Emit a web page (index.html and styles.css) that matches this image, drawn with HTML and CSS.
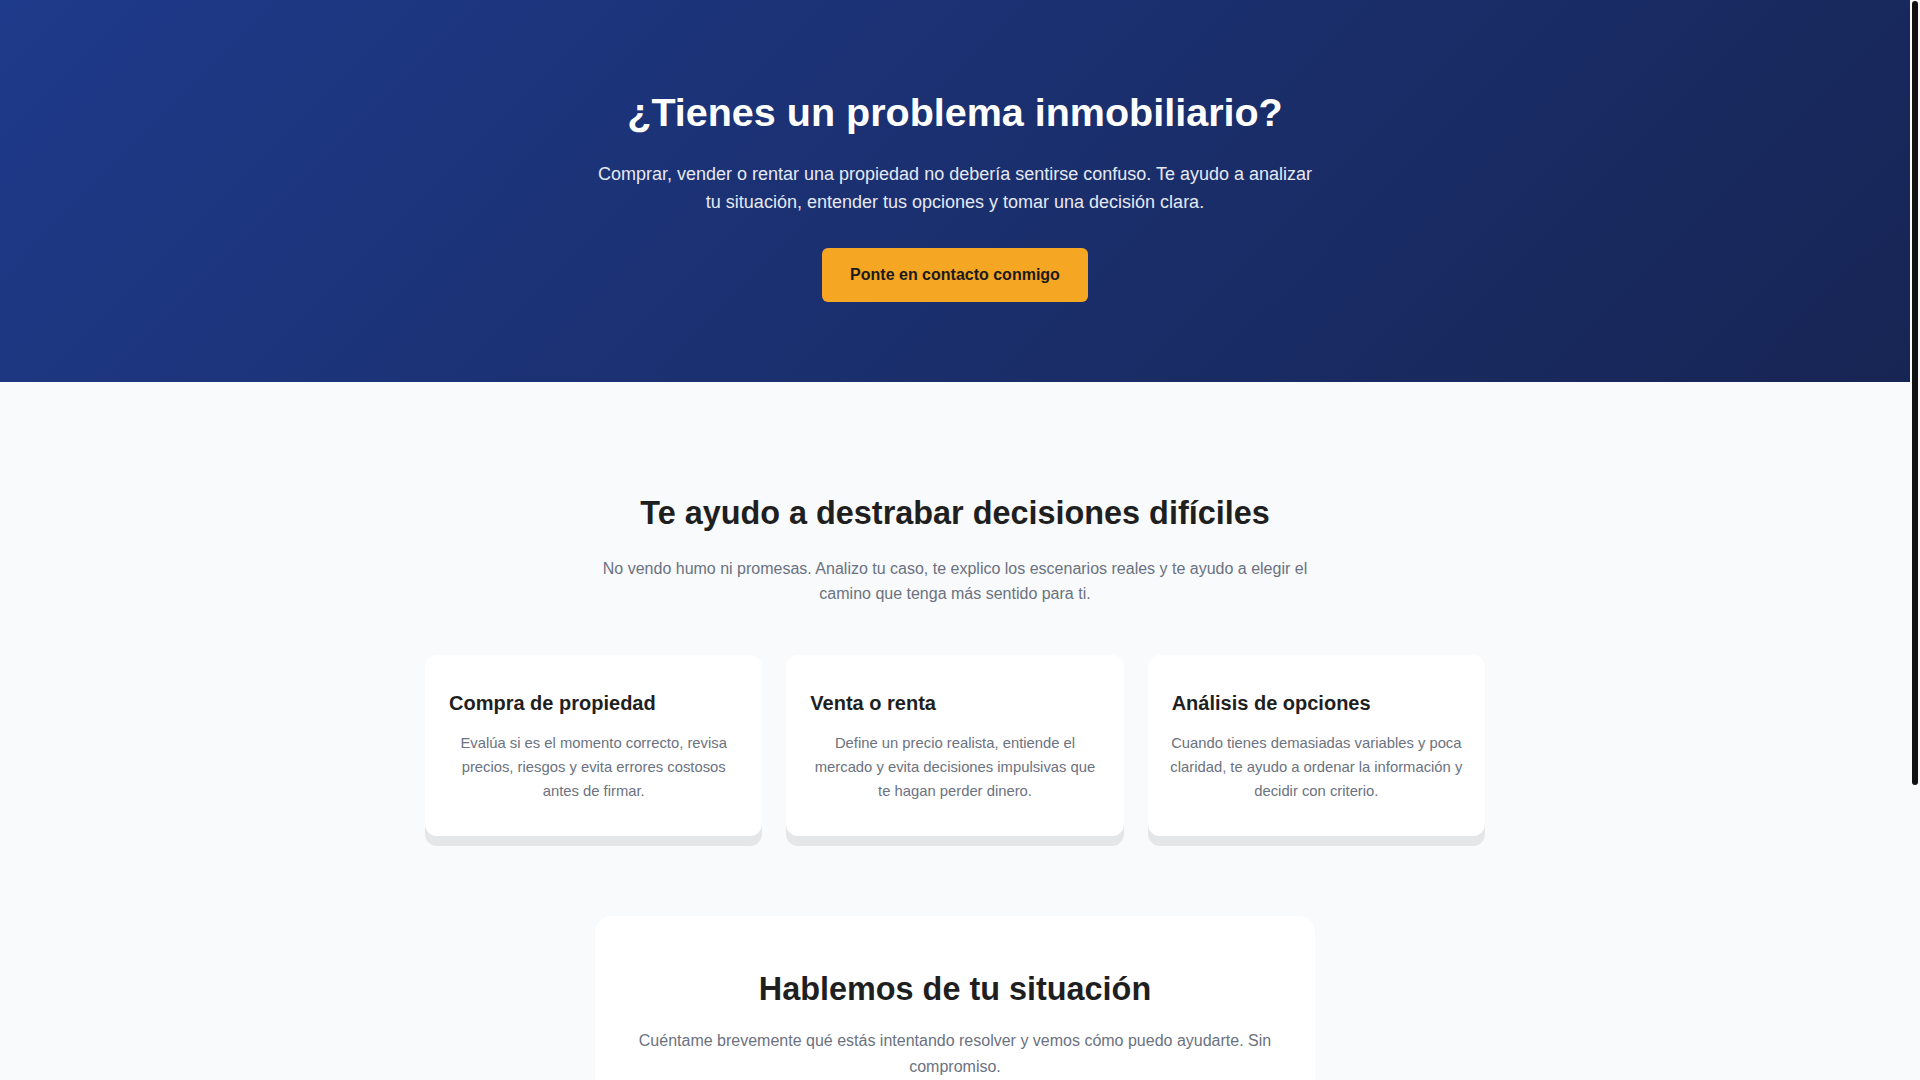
FILE: index.html
```html
<!DOCTYPE html>
<html lang="es">
<head>
<meta charset="utf-8">
<title>Asesoría inmobiliaria</title>
<link rel="stylesheet" href="styles.css">
</head>
<body>
  <header class="hero">
    <h1 class="hero-title">¿Tienes un problema inmobiliario?</h1>
    <p class="hero-text">Comprar, vender o rentar una propiedad no debería sentirse confuso. Te ayudo a analizar tu situación, entender tus opciones y tomar una decisión clara.</p>
    <a class="btn-primary" href="#contacto">Ponte en contacto conmigo</a>
  </header>

  <section class="services">
    <h2 class="section-title">Te ayudo a destrabar decisiones difíciles</h2>
    <p class="section-text">No vendo humo ni promesas. Analizo tu caso, te explico los escenarios reales y te ayudo a elegir el camino que tenga más sentido para ti.</p>
    <div class="cards">
      <article class="card">
        <h3 class="card-title">Compra de propiedad</h3>
        <p class="card-text">Evalúa si es el momento correcto, revisa precios, riesgos y evita errores costosos antes de firmar.</p>
      </article>
      <article class="card">
        <h3 class="card-title">Venta o renta</h3>
        <p class="card-text">Define un precio realista, entiende el mercado y evita decisiones impulsivas que te hagan perder dinero.</p>
      </article>
      <article class="card">
        <h3 class="card-title">Análisis de opciones</h3>
        <p class="card-text">Cuando tienes demasiadas variables y poca claridad, te ayudo a ordenar la información y decidir con criterio.</p>
      </article>
    </div>
  </section>

  <section class="contact" id="contacto">
    <div class="contact-card">
      <h2 class="contact-title">Hablemos de tu situación</h2>
      <p class="contact-text">Cuéntame brevemente qué estás intentando resolver y vemos cómo puedo ayudarte. Sin compromiso.</p>
      <form class="contact-form">
        <input class="field" type="text" placeholder="Tu nombre">
        <input class="field" type="text" placeholder="Tu teléfono o correo">
        <textarea class="field field-area" placeholder="Cuéntame tu situación"></textarea>
        <button class="btn-submit" type="button">Enviar mensaje</button>
      </form>
    </div>
  </section>

  <div class="scroll-thumb" aria-hidden="true"></div>
</body>
</html>
```

FILE: styles.css
```css
* {
  box-sizing: border-box;
}

html {
  background: #f8fafc;
}

body {
  margin: 0 10px 0 0;
  font-family: "Liberation Sans", Arial, sans-serif;
  background: #f8fafc;
  color: #222222;
}

.scroll-thumb {
  position: fixed;
  top: 1px;
  right: 2px;
  width: 6px;
  height: 784px;
  background: #111111;
  border-radius: 3px;
}

.hero {
  background: linear-gradient(135deg, #1e3a8a 0%, #172554 100%);
  color: #ffffff;
  text-align: center;
  padding: 88px 20px 80px;
  display: flex;
  flex-direction: column;
  align-items: center;
}

.hero-title {
  margin: 0;
  font-size: 39.5px;
  line-height: 48px;
  font-weight: 700;
}

.hero-text {
  margin: 24px 0 0;
  max-width: 720px;
  font-size: 18px;
  line-height: 28px;
  color: #e5e9f2;
}

.btn-primary {
  margin-top: 32px;
  display: inline-block;
  background: #f5a623;
  color: #1a1a1a;
  font-size: 16px;
  font-weight: 700;
  line-height: 18px;
  padding: 18px 28px;
  border-radius: 6px;
  text-decoration: none;
}

.services {
  padding: 112px 20px 80px;
  display: flex;
  flex-direction: column;
  align-items: center;
  text-align: center;
}

.section-title {
  margin: 0;
  font-size: 32.4px;
  line-height: 38.4px;
  font-weight: 700;
  color: #1f1f1f;
}

.section-text {
  margin: 25px 0 0;
  max-width: 720px;
  font-size: 16px;
  line-height: 24.8px;
  color: #6b7280;
}

.cards {
  margin-top: 48px;
  width: 100%;
  max-width: 1060px;
  display: grid;
  grid-template-columns: repeat(3, 1fr);
  gap: 24px;
}

.card {
  background: #ffffff;
  border-radius: 12px;
  padding: 36px 22px 33px;
  box-shadow: 0 10px 0 #e5e6e8;
}

.card-title {
  margin: 0 0 16px 2px;
  text-align: left;
  font-size: 20px;
  line-height: 24px;
  font-weight: 700;
  color: #1f1f1f;
}

.card-text {
  margin: 0;
  font-size: 14.8px;
  line-height: 24px;
  color: #6b7280;
  text-align: center;
}

.contact {
  padding: 0 20px 30px;
  display: flex;
  justify-content: center;
}

.contact-card {
  width: 100%;
  max-width: 720px;
  background: #ffffff;
  border-radius: 16px;
  padding: 54px 40px 40px;
  text-align: center;
}

.contact-title {
  margin: 0 0 20px;
  font-size: 32.4px;
  line-height: 38.4px;
  font-weight: 700;
  color: #1f1f1f;
}

.contact-text {
  margin: 0;
  font-size: 16px;
  line-height: 25.5px;
  color: #6b7280;
}

.contact-form {
  margin-top: 28px;
  display: flex;
  flex-direction: column;
  gap: 16px;
}

.field {
  height: 48px;
  width: 100%;
  border: 1px solid #d1d5db;
  border-radius: 8px;
  padding: 12px 14px;
  font-family: "Liberation Sans", Arial, sans-serif;
  font-size: 16px;
  color: #222222;
  background: #ffffff;
}

.field-area {
  height: 110px;
  resize: none;
}

.btn-submit {
  height: 54px;
  border: none;
  border-radius: 6px;
  background: #f5a623;
  color: #1a1a1a;
  font-family: "Liberation Sans", Arial, sans-serif;
  font-size: 16px;
  font-weight: 700;
}
```
